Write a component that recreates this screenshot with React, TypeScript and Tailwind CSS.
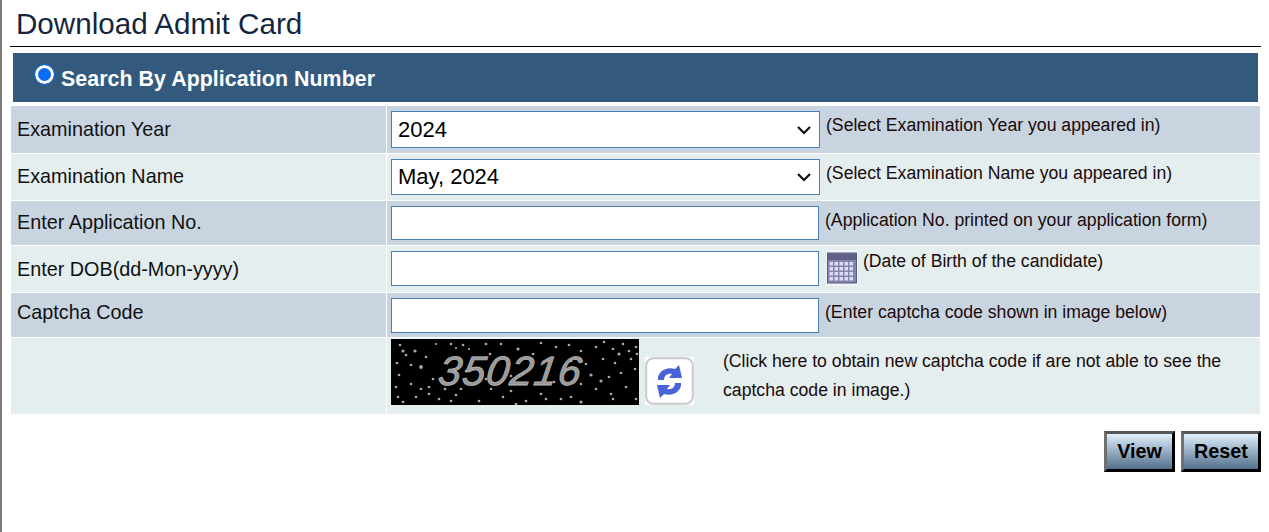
import React from "react";

const dots: [number, number, number][] = [
  [9,6,1],[12,12,1.2],[15,16,1],[24,12,1.2],[6,24,1],[20,26,1],[30,28,1.4],[35,18,1],[45,5,.8],[60,5,1],[65,9,.8],[72,6,1],[78,10,.8],[95,5,1],[99,15,1],[110,5,1],[127,10,1.2],[150,4,1],[165,8,1],[178,6,1],[190,12,1],[205,8,1],[213,3,1],[222,10,1],[232,5,1],[238,12,1],[245,8,1],[228,15,1.2],[212,20,1],[224,24,1],[240,20,1],[195,25,1],[180,22,1],[200,36,1.2],[210,42,1.2],[218,38,1],[230,34,1],[244,30,1],[190,45,1],[205,50,1],[220,55,1],[235,48,1],[245,60,1],[170,60,1],[180,58,1],[190,63,1.2],[150,55,1],[155,60,1],[135,62,1],[120,52,1],[112,58,1],[125,65,1],[100,50,1],[95,40,1],[88,62,1],[70,50,1],[65,56,1],[60,62,1],[48,60,1],[38,55,1],[25,58,1],[30,50,1],[20,45,1],[5,48,1],[7,58,1],[12,63,1],[42,40,1],[38,48,1],[54,50,1],[62,33,1],[75,32,1],[120,37,1],[163,43,1],[175,45,1],[222,60,1],[246,15,1],[142,15,1],[8,36,1]
];

function Captcha() {
  return (
    <svg width="248" height="66" viewBox="0 0 248 66" className="block shrink-0">
      <rect width="248" height="66" fill="#000" />
      {dots.map(([x, y, r], i) => (
        <circle key={i} cx={x} cy={y} r={r * 1.35} fill="#a8a8a8" />
      ))}
      <text transform="translate(46 46) skewX(-8)" fill="#999" fontFamily="Liberation Sans" fontStyle="italic" fontSize="41" stroke="#b4b4b4" strokeWidth="0.8" letterSpacing="1.1">350216</text>
    </svg>
  );
}

function Refresh() {
  return (
    <svg width="49" height="48" viewBox="0 0 49 48" className="block shrink-0">
      <rect width="49" height="48" fill="#fff" />
      <rect x="1.2" y="1.2" width="46.6" height="45.6" rx="7" fill="#fff" stroke="#c9c9c9" strokeWidth="2" />
      <g fill="#4a62d8">
        <path d="M13 23 C12 15 21 9 30 12 L34 8 L37 21 L24 21 L27 17 C22 16 19 19 19 23 Z" />
        <path d="M36 26 C37 34 28 40 19 37 L15 41 L12 28 L25 28 L22 32 C27 33 30 30 30 26 Z" />
      </g>
    </svg>
  );
}

function Calendar() {
  const cells = [];
  for (let r = 0; r < 4; r++) for (let c = 0; c < 5; c++) cells.push(<rect key={`${r}-${c}`} x={3.5 + c * 5} y={12 + r * 5} width="3.5" height="3.5" fill="#dcdcf6" />);
  return (
    <svg width="32" height="36" viewBox="0 0 32 36" className="block shrink-0">
      <rect width="32" height="36" fill="#f0f3f7" />
      <rect x="1.5" y="3" width="29" height="30" fill="#8484ad" stroke="#5b5b80" />
      <rect x="2" y="3.5" width="28" height="6.5" fill="#5f5f88" />
      {cells}
    </svg>
  );
}

function Row({ bg, h, label, children, labelClass = "" }: { bg: string; h: string; label: string; children: React.ReactNode; labelClass?: string }) {
  return (
    <div className={`flex ${h} ${bg}`}>
      <div className={`w-[375px] shrink-0 pl-[6px] text-[19.8px] leading-[23px] text-[#111] ${labelClass}`}>{label}</div>
      <div className="w-[1px] shrink-0 bg-white" />
      <div className="flex min-w-0 flex-1 items-start">{children}</div>
    </div>
  );
}

function Select({ value, h, mt, textClass = "" }: { value: string; h: string; mt: string; textClass?: string }) {
  return (
    <div className={`ml-[4px] ${mt} flex ${h} w-[429px] shrink-0 items-center justify-between border border-[#4a7fb5] bg-white pl-[6px] pr-[7px] text-[22px] text-black`}>
      <span className={textClass}>{value}</span>
      <svg width="16" height="10" viewBox="0 0 16 10" fill="none" stroke="#111" strokeWidth="2.2">
        <path d="M2 2 L8 8 L14 2" />
      </svg>
    </div>
  );
}

function Input({ h, mt }: { h: string; mt: string }) {
  return <div className={`ml-[4px] ${mt} ${h} w-[428px] shrink-0 border border-[#4a7fb5] bg-white`} />;
}

function Hint({ children, cls }: { children: React.ReactNode; cls: string }) {
  return <div className={`text-[17.65px] leading-[21px] text-[#1a0a0a] ${cls}`}>{children}</div>;
}

export default function App() {
  return (
    <div className="h-[532px] overflow-hidden border-l-2 border-[#7a7a7a] bg-white font-['Liberation_Sans',Arial,sans-serif]">
      <div className="pl-[8px] pr-[8px]">
        <div className="h-[46px] pl-[6px] pt-[6px] text-[29.6px] leading-[35px] text-[#14263d]">Download Admit Card</div>
        <div className="h-[1px] bg-black" />
        <div className="mx-[3px] mt-[6px] flex h-[49px] items-start bg-[#335a7c] pl-[22px]">
          <span className="mt-[12px] h-[19px] w-[19px] rounded-full border-[3px] border-white bg-[#0a6cf5] outline outline-1 outline-[#0a6cf5]" />
          <span className="ml-[7px] mt-[14px] text-[21.33px] font-bold leading-[24px] tracking-[0.07px] text-white">Search By Application Number</span>
        </div>
        <div className="ml-[1px] mr-[1px] mt-[4px] flex flex-col gap-[1px]">
          <Row bg="bg-[#c8d5e0]" h="h-[47px]" label="Examination Year" labelClass="pt-[12px]">
            <Select value="2024" h="h-[37px]" mt="mt-[5px]" />
            <Hint cls="ml-[6px] mt-[9px]">(Select Examination Year you appeared in)</Hint>
          </Row>
          <Row bg="bg-[#e4eeef]" h="h-[46px]" label="Examination Name" labelClass="pt-[11px]">
            <Select value="May, 2024" h="h-[36px]" mt="mt-[5px]" textClass="-translate-y-[1px]" />
            <Hint cls="ml-[6px] mt-[9px]">(Select Examination Name you appeared in)</Hint>
          </Row>
          <Row bg="bg-[#c8d5e0]" h="h-[44px]" label="Enter Application No." labelClass="pt-[10px]">
            <Input h="h-[34px]" mt="mt-[5px]" />
            <Hint cls="ml-[6px] mt-[9px]">(Application No. printed on your application form)</Hint>
          </Row>
          <Row bg="bg-[#e4eeef]" h="h-[46px]" label="Enter DOB(dd-Mon-yyyy)" labelClass="pt-[12px]">
            <Input h="h-[35px]" mt="mt-[5px]" />
            <div className="ml-[7px] mt-[4px]"><Calendar /></div>
            <Hint cls="ml-[5px] mt-[5px]">(Date of Birth of the candidate)</Hint>
          </Row>
          <Row bg="bg-[#c8d5e0]" h="h-[44px]" label="Captcha Code" labelClass="pt-[8px]">
            <Input h="h-[35px]" mt="mt-[5px]" />
            <Hint cls="ml-[6px] mt-[9px]">(Enter captcha code shown in image below)</Hint>
          </Row>
          <Row bg="bg-[#e4eeef]" h="h-[76px]" label="">
            <div className="ml-[4px] mt-[1px]"><Captcha /></div>
            <div className="ml-[6px] mt-[19px]"><Refresh /></div>
            <Hint cls="ml-[29px] mt-[9px] w-[530px] !leading-[29px]">(Click here to obtain new captcha code if are not able to see the captcha code in image.)</Hint>
          </Row>
        </div>
        <div className="mt-[17px] flex justify-end gap-[6px]">
          <button className="flex h-[41px] w-[71px] items-center justify-center border-[3px] border-b-black border-l-[#6f6f6f] border-r-black border-t-[#555] bg-gradient-to-b from-[#dff0fd] to-[#55718c] text-[19.8px] font-bold text-black">View</button>
          <button className="flex h-[41px] w-[80px] items-center justify-center border-[3px] border-b-black border-l-[#6f6f6f] border-r-black border-t-[#555] bg-gradient-to-b from-[#dff0fd] to-[#55718c] text-[19.8px] font-bold text-black">Reset</button>
        </div>
      </div>
    </div>
  );
}
